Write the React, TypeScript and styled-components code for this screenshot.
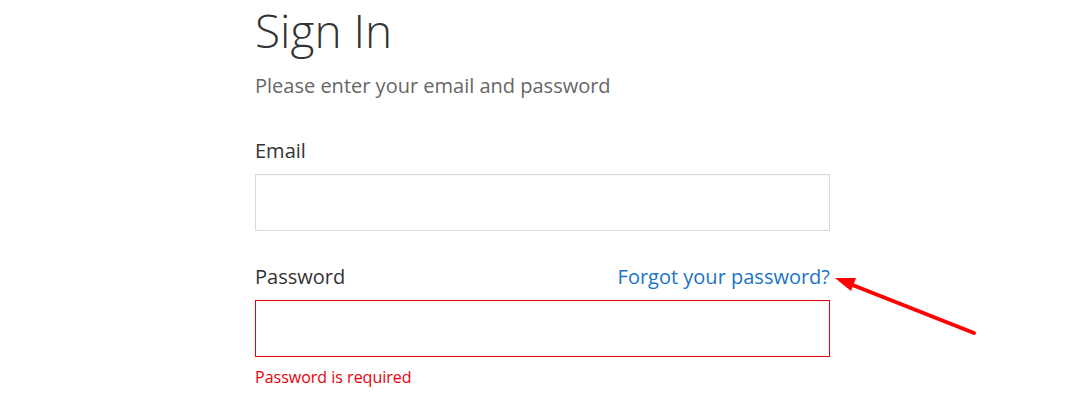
import React from "react";
import styled, { createGlobalStyle } from "styled-components";

const Global = createGlobalStyle`
  html, body { margin: 0; padding: 0; background: #fff; }
  body { font-family: "Open Sans", "Liberation Sans", sans-serif; }
`;

const Page = styled.div`
  position: relative;
  width: 1077px;
  height: 410px;
  overflow: hidden;
  background: #fff;
`;

const Form = styled.form`
  display: flex;
  flex-direction: column;
  width: 575px;
  margin-left: 255px;
  padding-top: 2px;
`;

const Title = styled.h1`
  margin: 0;
  font-size: 46px;
  line-height: 56px;
  font-weight: 300;
  color: #333;
`;

const Subtitle = styled.p`
  margin: 14px 0 0;
  font-size: 20px;
  line-height: 28px;
  color: #666;
`;

const Field = styled.div<{ $gap: number }>`
  display: flex;
  flex-direction: column;
  margin-top: ${(p) => p.$gap}px;
`;

const LabelRow = styled.div`
  display: flex;
  justify-content: space-between;
  align-items: baseline;
`;

const Label = styled.label`
  font-size: 20px;
  line-height: 28px;
  color: #333;
`;

const Link = styled.a`
  font-size: 20px;
  line-height: 28px;
  color: #1a73c8;
  text-decoration: none;
`;

const Input = styled.input<{ $error?: boolean }>`
  box-sizing: border-box;
  width: 575px;
  height: 57px;
  margin-top: 9px;
  border: 1px solid ${(p) => (p.$error ? "#e8000b" : "#d9d9d9")};
  border-radius: 0;
  background: #fff;
  outline: none;
  padding: 0 12px;
  font: inherit;
  box-shadow: inset 0 1px 2px rgba(0, 0, 0, 0.04);
`;

const ErrorText = styled.div`
  margin-top: 9px;
  font-size: 16px;
  line-height: 22px;
  color: #e8000b;
`;

const Arrow = styled.svg`
  position: absolute;
  left: 0;
  top: 0;
  pointer-events: none;
`;

export default function App() {
  return (
    <Page>
      <Global />
      <Form onSubmit={(e) => e.preventDefault()}>
        <Title>Sign In</Title>
        <Subtitle>Please enter your email and password</Subtitle>
        <Field $gap={37}>
          <Label htmlFor="email">Email</Label>
          <Input id="email" type="email" />
        </Field>
        <Field $gap={32}>
          <LabelRow>
            <Label htmlFor="password">Password</Label>
            <Link href="#">Forgot your password?</Link>
          </LabelRow>
          <Input id="password" type="password" $error />
          <ErrorText>Password is required</ErrorText>
        </Field>
      </Form>
      <Arrow width="1077" height="410" viewBox="0 0 1077 410">
        <line x1="974" y1="333" x2="850" y2="284" stroke="#ff0000" strokeWidth="4" strokeLinecap="round" />
        <polygon points="835,278 856,278 851,291" fill="#ff0000" />
      </Arrow>
    </Page>
  );
}
